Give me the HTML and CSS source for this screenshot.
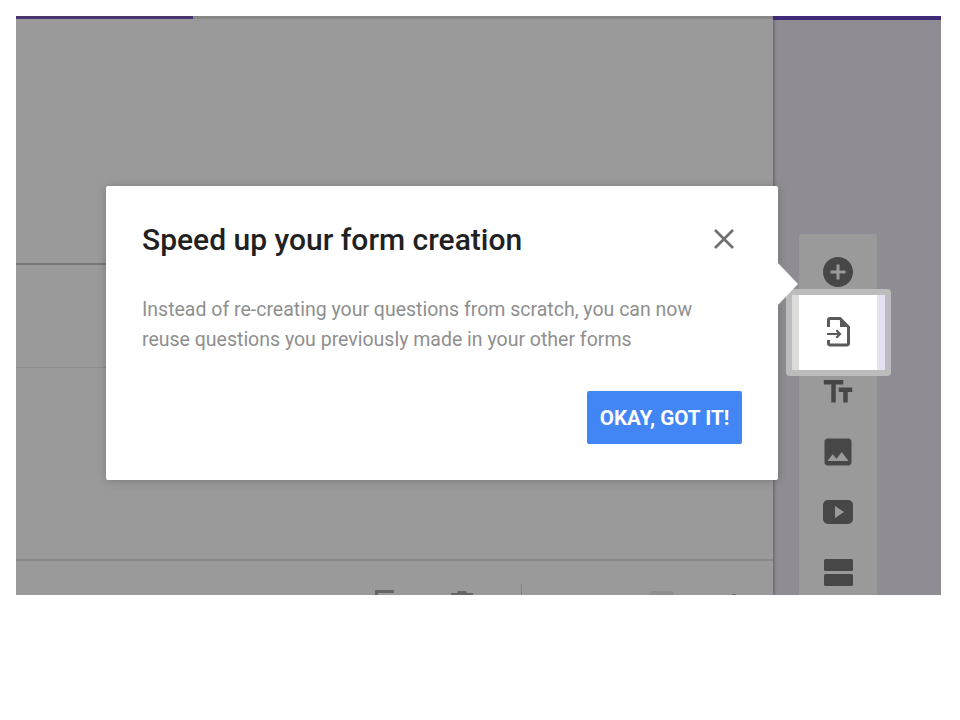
FILE: index.html
```html
<!DOCTYPE html>
<html lang="en">
<head>
<meta charset="utf-8">
<title>Speed up your form creation</title>
<link rel="stylesheet" href="styles.css">
</head>
<body>
<div class="screen">
  <main class="editor">
    <div class="tabs"><div class="tab-active"></div></div>
    <div class="band band-top"></div>
    <div class="band band-mid"></div>
    <div class="band band-low"></div>
    <div class="footer">
      <div class="tool tool-copy"><svg width="26" height="26" viewBox="0 0 26 26"><path d="M2 26V5h19v3H5v18z" fill="#666"/></svg></div>
      <div class="tool tool-trash"><svg width="26" height="26" viewBox="0 0 26 26"><path d="M9 3h8l1 2h6v3H2V5h6z" fill="#666"/></svg></div>
      <div class="divider"></div>
      <div class="tool tool-toggle"><div class="toggle"></div></div>
      <div class="tool tool-more"><svg width="6" height="12" viewBox="0 0 6 12"><circle cx="3" cy="4" r="3" fill="#666"/></svg></div>
    </div>
  </main>
  <aside class="side">
    <div class="side-bar"></div>
    <div class="toolbar">
      <div class="item"><svg class="icon" width="36" height="36" viewBox="0 0 24 24"><path d="M12 2C6.480 2 2 6.480 2 12s4.480 10 10 10 10-4.480 10-10S17.520 2 12 2zm5 11h-4v4h-2v-4H7v-2h4V7h2v4h4v2z"/></svg></div>
      <div class="item item-lit">
        <div class="lit"></div>
        <svg class="icon-import" width="30" height="36" viewBox="0 0 30 36">
          <path d="M5.500 13V6A1.500 1.500 0 0 1 7 4.500H17L25.500 13V29.500A1.500 1.500 0 0 1 24 31H7A1.500 1.500 0 0 1 5.500 29.500V26" fill="none" stroke="#5a5a5a" stroke-width="3"/>
          <path d="M17 4.500V13H25.500z" fill="#5a5a5a"/>
          <path d="M4 20H17M13.300 16.300L17 20l-3.700 3.700" fill="none" stroke="#5a5a5a" stroke-width="2.200"/>
        </svg>
      </div>
      <div class="item"><svg class="icon" width="36" height="36" viewBox="0 0 24 24"><path d="M2.500 4v3h5v12h3V7h5V4h-13zm19 5h-9v3h3v7h3v-7h3V9z"/></svg></div>
      <div class="item"><svg class="icon" width="36" height="36" viewBox="0 0 24 24"><path d="M21 19V5c0-1.100-.9-2-2-2H5c-1.100 0-2 .9-2 2v14c0 1.100.9 2 2 2h14c1.100 0 2-.9 2-2zM8.500 13.500l2.500 3.010L14.500 12l4.500 6H5l3.500-4.500z"/></svg></div>
      <div class="item"><svg class="icon" width="30" height="24" viewBox="0 0 30 24"><path d="M5 0h20a5 5 0 0 1 5 5v14a5 5 0 0 1-5 5H5a5 5 0 0 1-5-5V5a5 5 0 0 1 5-5zm7 6v12l9-6z" fill-rule="evenodd"/></svg></div>
      <div class="item"><svg class="icon" width="29" height="27" viewBox="0 0 29 27"><rect width="29" height="12" rx="1.500"/><rect y="15" width="29" height="12" rx="1.500"/></svg></div>
    </div>
  </aside>
  <section class="dialog">
    <span class="arrow"></span>
    <header class="dialog-head">
      <h1 class="dialog-title">Speed up your form creation</h1>
      <svg class="close" width="24" height="24" viewBox="0 0 24 24"><path d="M3 3l18 18M21 3L3 21" stroke="#6f6f6f" stroke-width="2.600" fill="none"/></svg>
    </header>
    <p class="dialog-text">Instead of re-creating your questions from scratch, you can now reuse questions you previously made in your other forms</p>
    <div class="dialog-actions"><button class="okay" type="button">OKAY, GOT IT!</button></div>
  </section>
</div>
</body>
</html>
```

FILE: styles.css
```css
html, body {
  margin: 0;
  padding: 0;
  background: #fff;
}

body {
  padding: 16px 0 0 16px;
  font-family: Roboto, "Liberation Sans", sans-serif;
}

.screen {
  position: relative;
  display: flex;
  width: 925px;
  height: 579px;
  overflow: hidden;
  background: #9a9a9a;
}

.editor {
  display: flex;
  flex-direction: column;
  width: 757px;
  flex: none;
  background: #9a9a9a;
  box-shadow: 1px 0 3px rgba(60, 55, 70, .55);
  position: relative;
  z-index: 1;
}

.tabs {
  height: 3px;
  background: #878787;
  flex: none;
}

.tab-active {
  width: 177px;
  height: 3px;
  background: #4a3670;
}

.band {
  flex: none;
  box-sizing: border-box;
}

.band-top {
  height: 246px;
  border-bottom: 2px solid #787878;
}

.band-mid {
  height: 103px;
  border-bottom: 1px solid #8b8b8b;
}

.band-low {
  height: 193px;
  border-bottom: 2px solid #878787;
}

.footer {
  position: relative;
  display: flex;
  flex: 1;
  padding-left: 357px;
}

.tool {
  flex: none;
}

.tool-copy {
  margin-top: 24px;
  width: 76px;
}

.tool-trash {
  margin-top: 27px;
  width: 72px;
}

.divider {
  width: 1px;
  height: 40px;
  margin-top: 23px;
  background: #7f7f7f;
}

.tool-toggle {
  width: 209px;
  padding: 30px 0 0 128px;
  box-sizing: border-box;
}

.toggle {
  width: 24px;
  height: 8px;
  border-radius: 3px;
  background: #8e8e8e;
}

.tool-more {
  margin-top: 29px;
}

.side {
  position: relative;
  flex: 1;
  background: #8f8c93;
}

.side-bar {
  height: 4px;
  background: #3f2a78;
}

.toolbar {
  width: 78px;
  margin: 214px 0 0 26px;
  padding-top: 8px;
  background: #9a9a9a;
  border-radius: 2px;
  height: 400px;
}

.item {
  position: relative;
  display: flex;
  align-items: center;
  justify-content: center;
  height: 60px;
}

.icon {
  fill: #474747;
}

.icon-import {
  position: relative;
}

.lit {
  position: absolute;
  top: -13px;
  right: -14px;
  bottom: -14px;
  left: -13px;
  border: 6px solid #bcbcbc;
  border-radius: 4px;
  background: linear-gradient(to right, #dcdcdc 0 7px, #fff 7px 85px, #e5e1f2 85px);
}

.dialog {
  position: absolute;
  left: 90px;
  top: 170px;
  z-index: 2;
  box-sizing: border-box;
  width: 672px;
  height: 294px;
  padding: 36px 36px 0;
  background: #fff;
  border-radius: 2px;
  box-shadow: 0 1px 10px rgba(0, 0, 0, .2);
}

.arrow {
  position: absolute;
  top: 77px;
  left: 672px;
  border-top: 21px solid transparent;
  border-bottom: 21px solid transparent;
  border-left: 20px solid #fff;
}

.dialog-head {
  display: flex;
  justify-content: space-between;
  align-items: center;
  height: 36px;
}

.dialog-title {
  margin: 0;
  font-size: 30px;
  line-height: 36px;
  font-weight: 500;
  color: #212121;
}

.close {
  margin-right: 6px;
  position: relative;
  top: -1px;
}

.dialog-text {
  margin: 37px 0 0;
  font-size: 19.500px;
  line-height: 30px;
  color: #8f8f8f;
}

.dialog-actions {
  display: flex;
  justify-content: flex-end;
  margin-top: 36px;
}

.okay {
  width: 155px;
  height: 53px;
  padding: 0;
  border: 0;
  border-radius: 2px;
  background: #4285f4;
  color: #fff;
  font-family: inherit;
  font-size: 20.600px;
  font-weight: 700;
}
```
